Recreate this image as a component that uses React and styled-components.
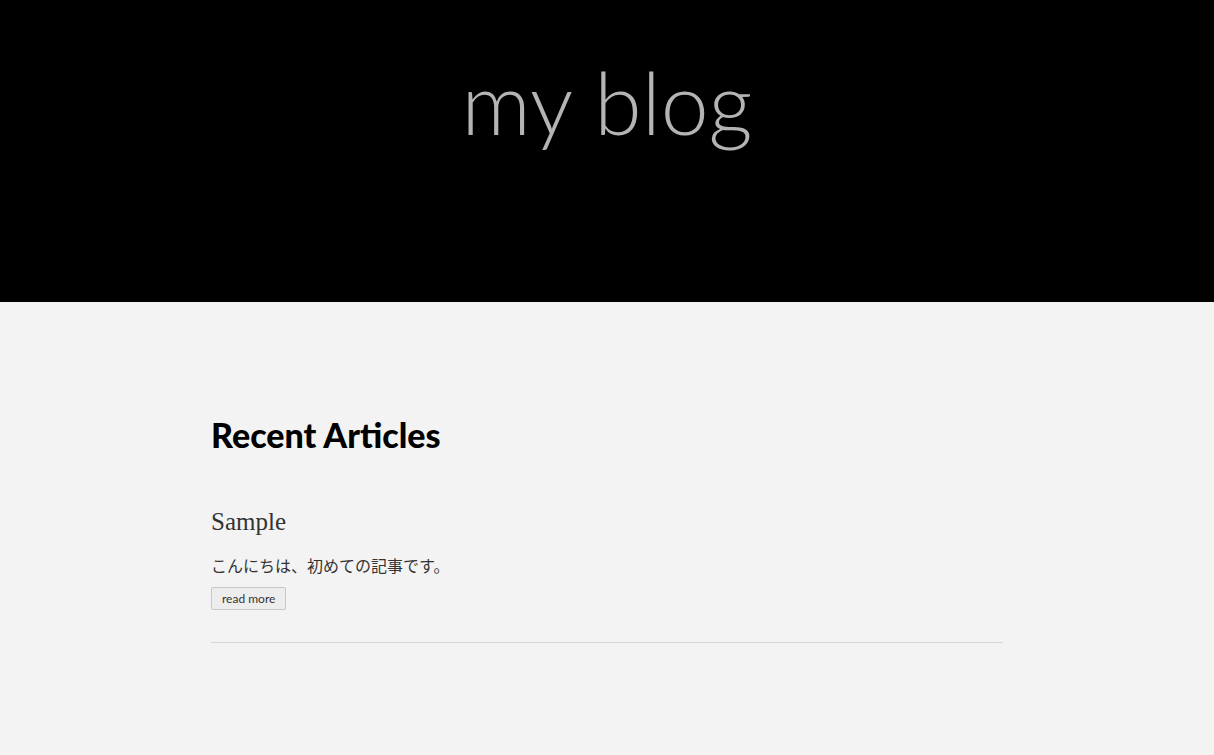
import styled, { createGlobalStyle } from "styled-components";

const GlobalStyle = createGlobalStyle`
  html, body {
    margin: 0;
    padding: 0;
    background: #f3f3f3;
  }
  body {
    font-family: Lato, "Noto Sans CJK JP", sans-serif;
  }
`;

const App = () => {
  return (
    <>
      <GlobalStyle />
      <Header>
        <SiteTitle>my blog</SiteTitle>
      </Header>
      <Main>
        <SectionTitle>Recent Articles</SectionTitle>
        <Article>
          <ArticleTitle>Sample</ArticleTitle>
          <Excerpt>こんにちは、初めての記事です。</Excerpt>
          <ReadMore>read more</ReadMore>
        </Article>
      </Main>
    </>
  );
};

const Header = styled.header`
  display: flex;
  justify-content: center;
  height: 302px;
  background: #000;
`;

const SiteTitle = styled.h1`
  margin: 47px 0 0;
  font-family: Lato, sans-serif;
  font-weight: 300;
  font-size: 86px;
  line-height: 110px;
  letter-spacing: 0;
  color: #b4b4b4;
`;

const Main = styled.main`
  width: 792px;
  margin: 0 auto;
  padding-top: 110px;
`;

const SectionTitle = styled.h2`
  margin: 0;
  font-family: Lato, sans-serif;
  font-weight: 900;
  font-size: 34px;
  line-height: 46px;
  color: #000;
`;

const Article = styled.article`
  display: flex;
  flex-direction: column;
  align-items: flex-start;
  margin-top: 48px;
  padding-bottom: 32px;
  border-bottom: 1px solid #d6d6d6;
`;

const ArticleTitle = styled.h3`
  margin: 0;
  font-family: "Liberation Serif", serif;
  font-weight: 400;
  font-size: 25px;
  line-height: 32px;
  color: #333;
`;

const Excerpt = styled.p`
  margin: 16px 0 0;
  font-family: "Noto Sans CJK JP", sans-serif;
  font-size: 16px;
  line-height: 22px;
  color: #333;
`;

const ReadMore = styled.button`
  margin-top: 11px;
  height: 23px;
  padding: 0 10px;
  border: 1px solid #c8c8c8;
  border-radius: 2px;
  background: #ededed;
  font-family: Lato, sans-serif;
  font-size: 12px;
  color: #333;
  cursor: pointer;
`;

export default App;
